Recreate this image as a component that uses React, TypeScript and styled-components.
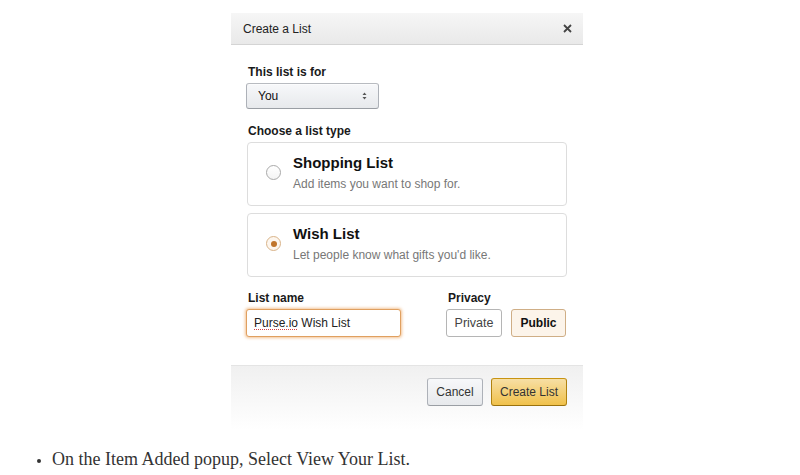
import React from "react";
import styled, { createGlobalStyle } from "styled-components";

const Global = createGlobalStyle`
  html, body { margin: 0; padding: 0; background: #fff; }
  body { font-family: "Liberation Sans", Arial, sans-serif; color: #111; }
  * { box-sizing: border-box; }
`;

const Page = styled.div`
  width: 800px;
  height: 475px;
  padding-top: 13px;
  overflow: hidden;
`;

const Dialog = styled.div`
  width: 352px;
  margin-left: 231px;
  background: #fff;
`;

const Header = styled.div`
  height: 32px;
  display: flex;
  align-items: center;
  justify-content: space-between;
  padding: 0 11px 0 12px;
  background: linear-gradient(to bottom, #f6f6f6, #e9e9e9);
  border-bottom: 1px solid #d4d4d4;
`;

const Title = styled.div`
  font-size: 12px;
  color: #222;
`;

const Close = styled.svg`
  width: 9px;
  height: 9px;
  display: block;
`;

const Body = styled.div`
  padding: 20px 16px 0 15px;
`;

const Label = styled.div<{ $mt?: number }>`
  font-size: 12px;
  font-weight: bold;
  line-height: 15px;
  color: #1a1a1a;
  margin-top: ${(p) => p.$mt ?? 0}px;
  margin-bottom: 3px;
  padding-left: 2px;
`;

const Select = styled.div`
  width: 133px;
  height: 26px;
  display: flex;
  align-items: center;
  justify-content: space-between;
  padding: 0 11px 0 11px;
  border: 1px solid #adb1b8;
  border-color: #b8bbc0 #adb1b8 #9a9ea4;
  border-radius: 3px;
  background: linear-gradient(to bottom, #f7f8fa, #e7e9ec);
  box-shadow: 0 1px 0 rgba(255, 255, 255, 0.6) inset;
  font-size: 12px;
  color: #111;
`;

const Cards = styled.div`
  display: flex;
  flex-direction: column;
  gap: 7px;
  padding-left: 1px;
`;

const Card = styled.div`
  height: 64px;
  display: flex;
  align-items: flex-start;
  gap: 12px;
  padding: 11px 0 0 18px;
  border: 1px solid #dddddd;
  border-radius: 4px;
`;

const Radio = styled.div<{ $checked?: boolean }>`
  flex: none;
  width: 15px;
  height: 15px;
  margin-top: 11px;
  border-radius: 50%;
  border: 1px solid ${(p) => (p.$checked ? "#d9b48a" : "#a9a9a9")};
  background: ${(p) => (p.$checked ? "#fdf6ee" : "linear-gradient(#ffffff, #f4f4f4)")};
  display: flex;
  align-items: center;
  justify-content: center;
  &::after {
    content: "";
    display: ${(p) => (p.$checked ? "block" : "none")};
    width: 6px;
    height: 6px;
    border-radius: 50%;
    background: #c0742a;
  }
`;

const CardText = styled.div`
  display: flex;
  flex-direction: column;
`;

const CardTitle = styled.div`
  font-size: 15px;
  font-weight: bold;
  line-height: 18px;
  color: #111;
`;

const CardDesc = styled.div`
  font-size: 12px;
  line-height: 16px;
  margin-top: 4px;
  color: #777;
`;

const Row = styled.div`
  display: flex;
  justify-content: space-between;
  margin-top: 14px;
`;

const Col = styled.div<{ $shift?: number }>`
  display: flex;
  flex-direction: column;
  margin-right: ${(p) => p.$shift ?? 0}px;
`;

const NameInput = styled.div`
  width: 155px;
  height: 28px;
  display: flex;
  align-items: center;
  padding-left: 7px;
  border: 1px solid #e0a060;
  border-radius: 3px;
  box-shadow: 0 0 3px 1px rgba(228, 121, 17, 0.45);
  font-size: 12px;
  color: #222;
  background: #fff;
`;

const Spell = styled.span`
  text-decoration: underline dotted #d04040;
  text-decoration-thickness: 1px;
  text-underline-offset: 2px;
`;

const Toggles = styled.div`
  display: flex;
  gap: 9px;
`;

const Toggle = styled.div<{ $active?: boolean; $w: number }>`
  width: ${(p) => p.$w}px;
  height: 28px;
  display: flex;
  align-items: center;
  justify-content: center;
  border-radius: 3px;
  font-size: ${(p) => (p.$active ? 12 : 12.5)}px;
  font-weight: ${(p) => (p.$active ? "bold" : "normal")};
  color: ${(p) => (p.$active ? "#111" : "#444")};
  border: 1px solid ${(p) => (p.$active ? "#cfae86" : "#b5b5b5")};
  background: ${(p) => (p.$active ? "#fcf4ea" : "#fff")};
`;

const Footer = styled.div`
  margin-top: 28px;
  height: 65px;
  display: flex;
  justify-content: flex-end;
  align-items: flex-start;
  gap: 8px;
  padding: 12px 16px 0 0;
  border-top: 1px solid #e4e4e4;
  background: linear-gradient(to bottom, #f0f0f0, #ffffff);
`;

const Button = styled.div<{ $primary?: boolean; $w: number }>`
  width: ${(p) => p.$w}px;
  height: 28px;
  display: flex;
  align-items: center;
  justify-content: center;
  border-radius: 3px;
  font-size: 12px;
  color: #333;
  border: 1px solid;
  border-color: ${(p) =>
    p.$primary ? "#c89411 #b0820f #99710d" : "#c6c8cc #adb1b8 #9a9ea4"};
  background: ${(p) =>
    p.$primary
      ? "linear-gradient(to bottom, #f7dfa5, #f0c14b)"
      : "linear-gradient(to bottom, #f7f8fa, #e7e9ec)"};
`;

const Bullets = styled.ul`
  margin: 17px 0 0 0;
  padding-left: 52px;
  font-family: "Liberation Serif", "DejaVu Serif", serif;
  font-size: 18px;
  line-height: 24px;
  color: #333;
  li::marker {
    font-size: 14px;
  }
`;

function SelectArrows() {
  return (
    <svg width="5" height="8" viewBox="0 0 5 8">
      <path d="M0.5 3 L2.5 0.5 L4.5 3 Z" fill="#555" />
      <path d="M0.5 5 L2.5 7.5 L4.5 5 Z" fill="#555" />
    </svg>
  );
}

export default function App() {
  return (
    <Page>
      <Global />
      <Dialog>
        <Header>
          <Title>Create a List</Title>
          <Close viewBox="0 0 9 9">
            <path d="M1 1 L8 8 M8 1 L1 8" stroke="#444" strokeWidth="1.8" />
          </Close>
        </Header>
        <Body>
          <Label>This list is for</Label>
          <Select>
            <span>You</span>
            <SelectArrows />
          </Select>
          <Label $mt={15}>Choose a list type</Label>
          <Cards>
            <Card>
              <Radio />
              <CardText>
                <CardTitle>Shopping List</CardTitle>
                <CardDesc>Add items you want to shop for.</CardDesc>
              </CardText>
            </Card>
            <Card>
              <Radio $checked />
              <CardText>
                <CardTitle>Wish List</CardTitle>
                <CardDesc>Let people know what gifts you'd like.</CardDesc>
              </CardText>
            </Card>
          </Cards>
          <Row>
            <Col>
              <Label>List name</Label>
              <NameInput>
                <Spell>Purse.io</Spell>&nbsp;Wish List
              </NameInput>
            </Col>
            <Col $shift={1}>
              <Label>Privacy</Label>
              <Toggles>
                <Toggle $w={56}>Private</Toggle>
                <Toggle $w={55} $active>
                  Public
                </Toggle>
              </Toggles>
            </Col>
          </Row>
        </Body>
        <Footer>
          <Button $w={56}>Cancel</Button>
          <Button $w={76} $primary>
            Create List
          </Button>
        </Footer>
      </Dialog>
      <Bullets>
        <li>On the Item Added popup, Select View Your List.</li>
      </Bullets>
    </Page>
  );
}
